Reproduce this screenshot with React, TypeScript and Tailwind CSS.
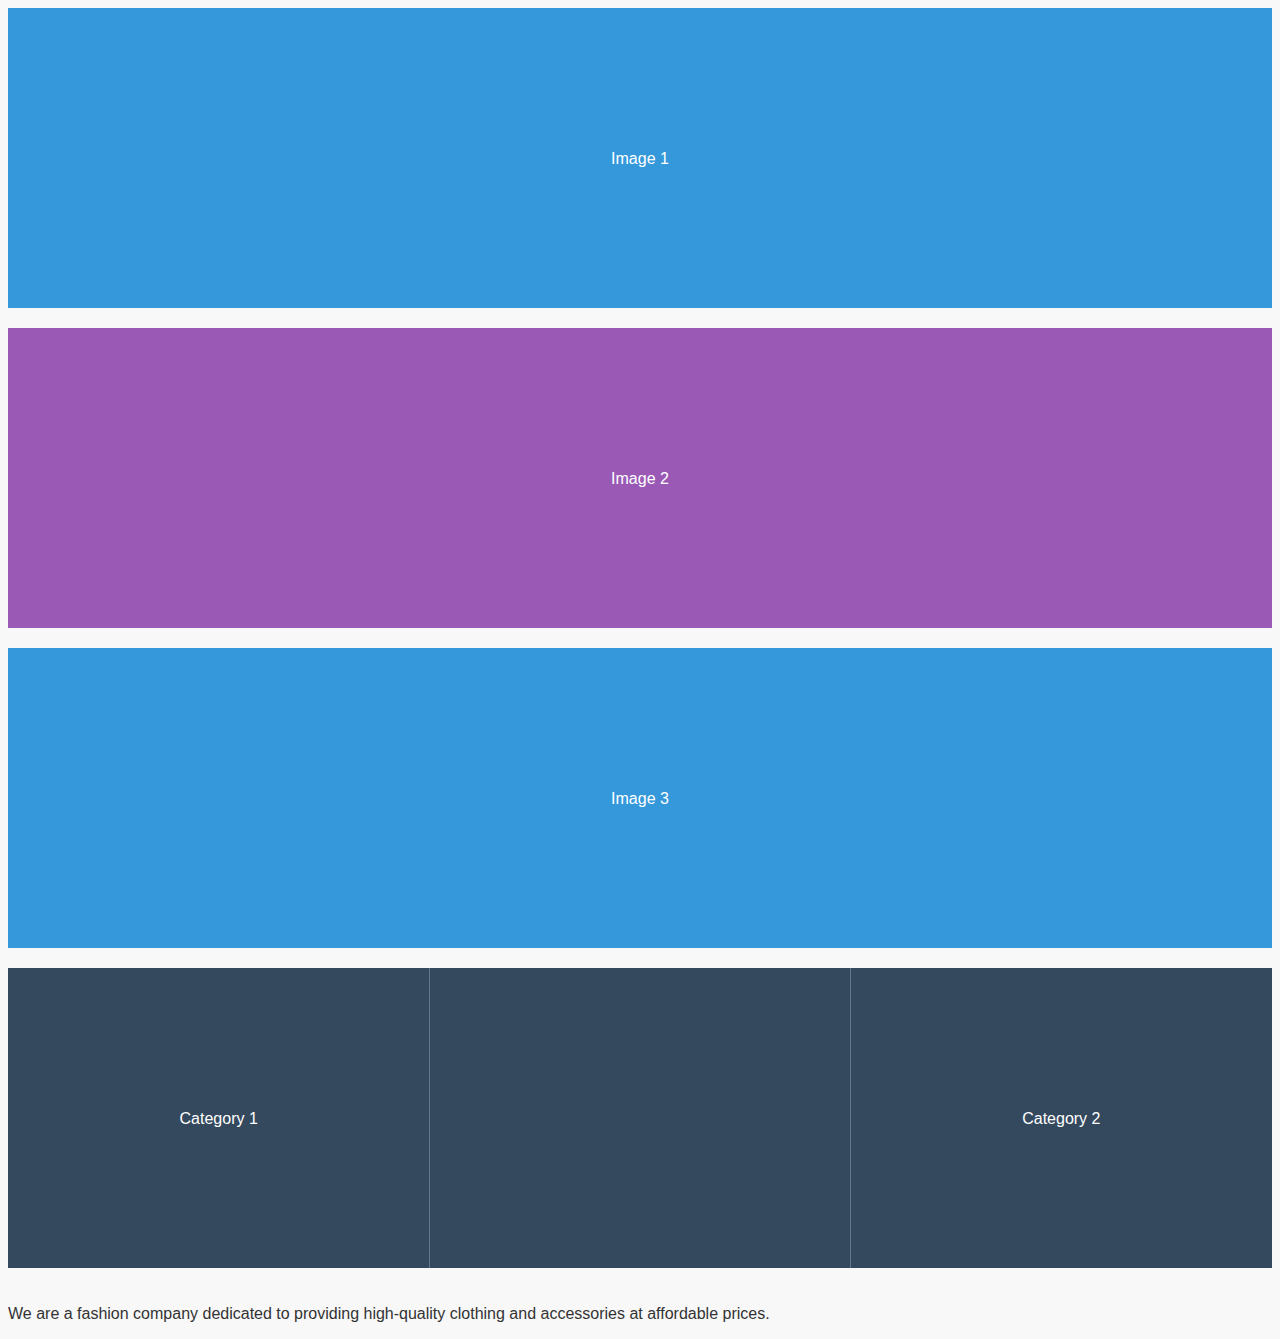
export default function App() {
  const font = { fontFamily: '"Liberation Sans", Arial, sans-serif' };
  return (
    <div className="min-h-[1339px] bg-[#f8f8f8] p-2 text-[#333]" style={font}>
      <div className="flex flex-col gap-5">
        <div className="flex h-[300px] items-center justify-center bg-[#3498db] pt-px text-base text-white">Image 1</div>
        <div className="flex h-[300px] items-center justify-center bg-[#9b59b6] pt-px text-base text-white">Image 2</div>
        <div className="flex h-[300px] items-center justify-center bg-[#3498db] pt-px text-base text-white">Image 3</div>
        <div className="grid h-[300px] grid-cols-3 bg-[#34495e] text-base text-white">
          <div className="flex items-center justify-center pt-px">Category 1</div>
          <div className="flex items-center justify-center border-x border-[#66778a]"></div>
          <div className="flex items-center justify-center pt-px">Category 2</div>
        </div>
      </div>
      <p className="mt-[34px] text-base leading-6">
        We are a fashion company dedicated to providing high-quality clothing and accessories at affordable prices.
      </p>
    </div>
  );
}
